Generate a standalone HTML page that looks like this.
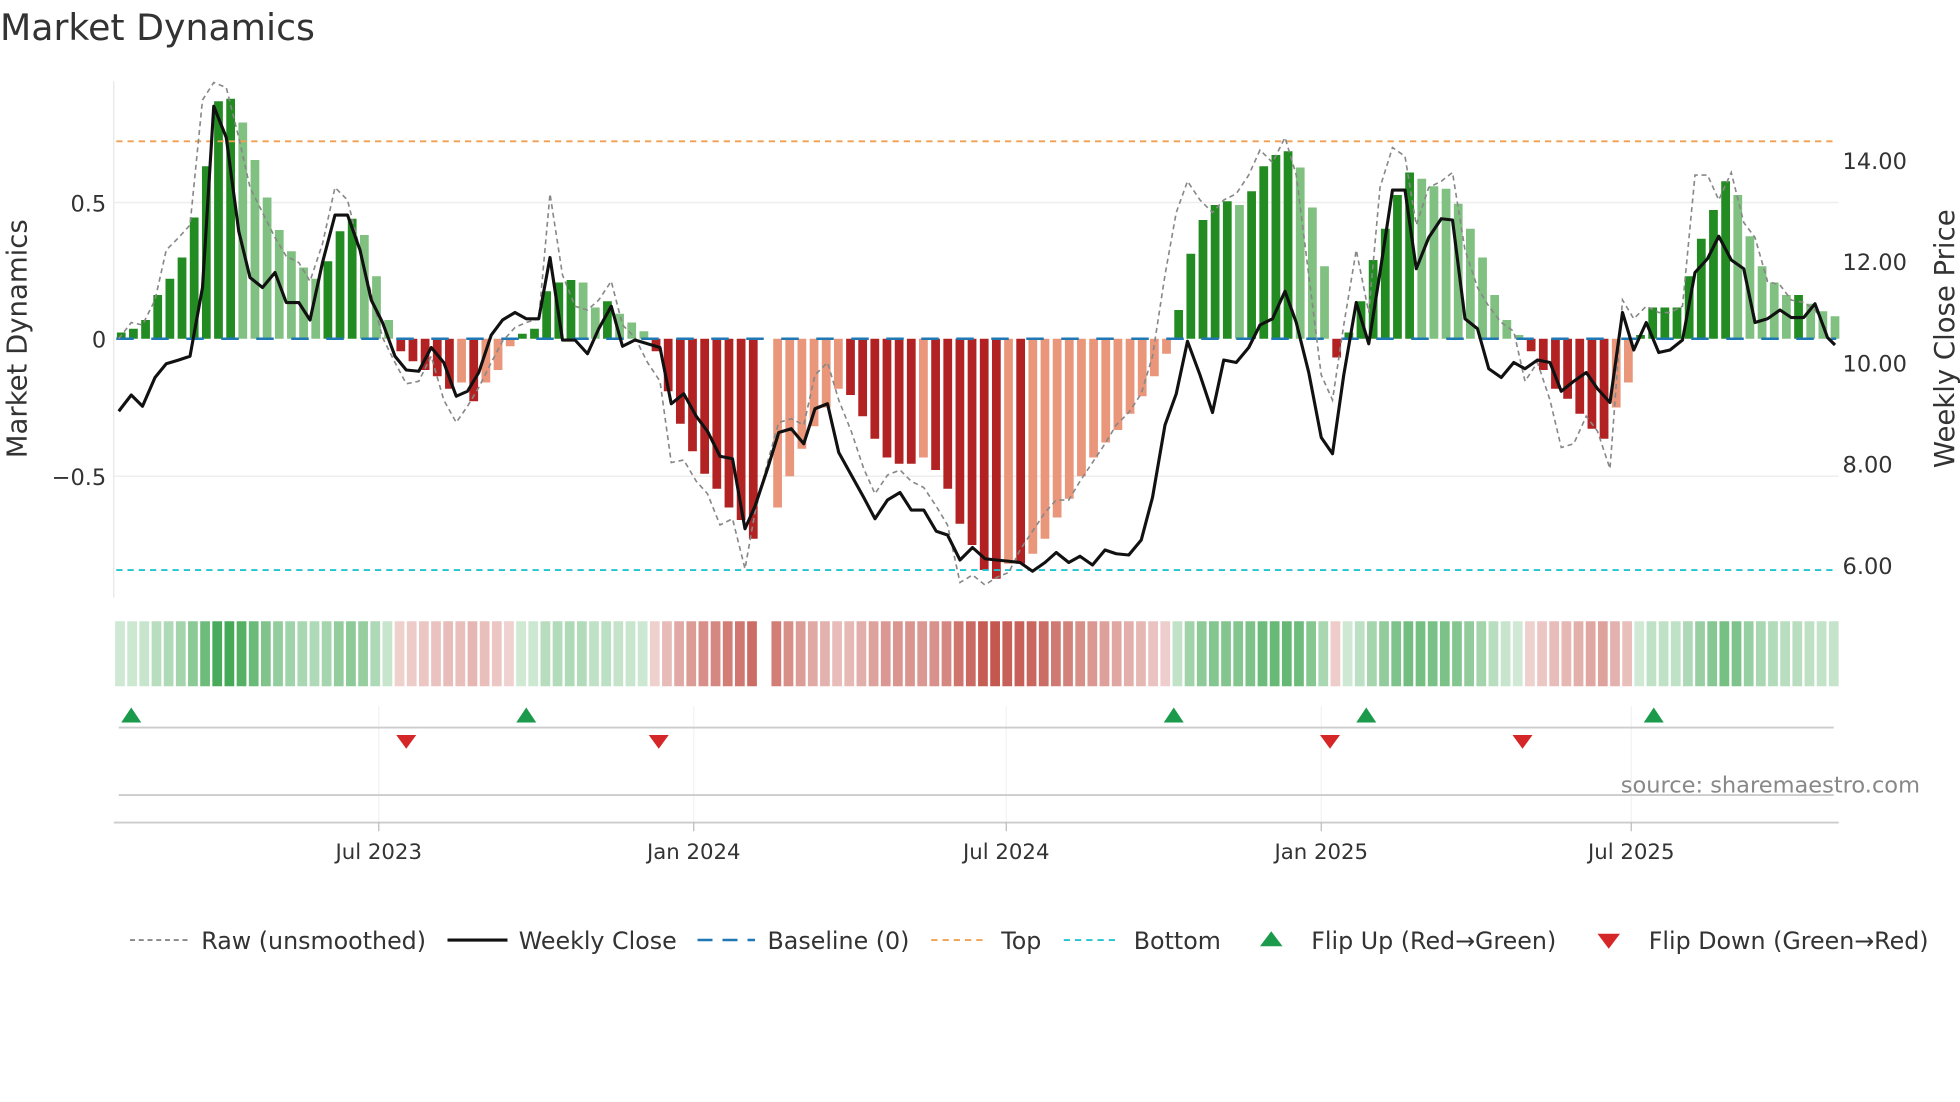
<!DOCTYPE html>
<html><head><meta charset="utf-8"><style>
html,body{margin:0;padding:0;background:#fff;}
svg{display:block;font-family:"DejaVu Sans","Liberation Sans",sans-serif;}
</style></head><body>
<svg id="s" width="1960" height="1102" viewBox="0 0 1568 881.6" xmlns="http://www.w3.org/2000/svg">
<rect width="1568" height="882" fill="#fff"/>
<text x="0" y="32" font-size="29" fill="#333">Market Dynamics</text>
<line x1="91" y1="65" x2="91" y2="478" stroke="#e6e6e6" stroke-width="1"/>
<line x1="91" y1="162" x2="1471" y2="162" stroke="#eee" stroke-width="1.2"/>
<line x1="91" y1="381" x2="1471" y2="381" stroke="#eee" stroke-width="1.2"/>
<g id="bars"></g>
<g id="strip"></g>
<line x1="93" y1="271" x2="1469" y2="271" stroke="#1f77b4" stroke-width="2" stroke-dasharray="14,14"/>
<line x1="93" y1="113" x2="1469" y2="113" stroke="#f0a050" stroke-width="1.5" stroke-dasharray="5,4"/>
<line x1="93" y1="456" x2="1469" y2="456" stroke="#22c4d0" stroke-width="1.5" stroke-dasharray="5,4"/>
<polyline id="raw" fill="none" stroke="#888" stroke-width="1.3" stroke-dasharray="4,3"/>
<polyline id="close" fill="none" stroke="#111" stroke-width="2.5" stroke-linejoin="round"/>
<g font-size="18" fill="#333" text-anchor="end">
<text x="85" y="169">0.5</text><text x="85" y="278">0</text><text x="85" y="388">−0.5</text>
</g>
<g font-size="18" fill="#333">
<text x="1474" y="135">14.00</text><text x="1474" y="216">12.00</text><text x="1474" y="297">10.00</text><text x="1474" y="378">8.00</text><text x="1474" y="459">6.00</text>
</g>
<text transform="translate(21,271) rotate(-90)" font-size="22" fill="#333" text-anchor="middle">Market Dynamics</text>
<text transform="translate(1563,271) rotate(-90)" font-size="22" fill="#333" text-anchor="middle">Weekly Close Price</text>
<g stroke="#f2f2f2" stroke-width="1">
<line x1="303" y1="565" x2="303" y2="658"/><line x1="555" y1="565" x2="555" y2="658"/><line x1="805" y1="565" x2="805" y2="658"/><line x1="1057" y1="565" x2="1057" y2="658"/><line x1="1305" y1="565" x2="1305" y2="658"/>
</g>
<line x1="95" y1="582" x2="1467" y2="582" stroke="#ccc" stroke-width="1.5"/>
<line x1="95" y1="636" x2="1467" y2="636" stroke="#ccc" stroke-width="1.5"/>
<line x1="91" y1="658" x2="1471" y2="658" stroke="#ccc" stroke-width="1.5"/>
<g stroke="#bbb" stroke-width="1"><line x1="303" y1="658" x2="303" y2="665"/><line x1="555" y1="658" x2="555" y2="665"/><line x1="805" y1="658" x2="805" y2="665"/><line x1="1057" y1="658" x2="1057" y2="665"/><line x1="1305" y1="658" x2="1305" y2="665"/></g>
<g fill="#1a9a4a"><polygon points="97,578 113,578 105,566"/><polygon points="413,578 429,578 421,566"/><polygon points="931,578 947,578 939,566"/><polygon points="1085,578 1101,578 1093,566"/><polygon points="1315,578 1331,578 1323,566"/></g>
<g fill="#d62728"><polygon points="317,588 333,588 325,599"/><polygon points="519,588 535,588 527,599"/><polygon points="1056,588 1072,588 1064,599"/><polygon points="1210,588 1226,588 1218,599"/></g>
<text x="1536" y="634" font-size="18" fill="#888" text-anchor="end">source: sharemaestro.com</text>
<g font-size="17" fill="#333" text-anchor="middle">
<text x="303" y="687">Jul 2023</text><text x="555" y="687">Jan 2024</text><text x="805" y="687">Jul 2024</text><text x="1057" y="687">Jan 2025</text><text x="1305" y="687">Jul 2025</text>
</g>
<g font-size="19" fill="#333">
<line x1="104" y1="752" x2="150" y2="752" stroke="#888" stroke-width="1.5" stroke-dasharray="4,3"/><text x="161" y="759">Raw (unsmoothed)</text>
<line x1="358" y1="752" x2="406" y2="752" stroke="#111" stroke-width="2.5"/><text x="415" y="759">Weekly Close</text>
<line x1="558" y1="752" x2="604" y2="752" stroke="#1f77b4" stroke-width="2" stroke-dasharray="12,8"/><text x="614" y="759">Baseline (0)</text>
<line x1="745" y1="752" x2="790" y2="752" stroke="#f0a050" stroke-width="1.5" stroke-dasharray="5,4"/><text x="801" y="759">Top</text>
<line x1="851" y1="752" x2="896" y2="752" stroke="#22c4d0" stroke-width="1.5" stroke-dasharray="5,4"/><text x="907" y="759">Bottom</text>
<polygon points="1008,757 1026,757 1017,745" fill="#1a9a4a"/><text x="1049" y="759">Flip Up (Red→Green)</text>
<polygon points="1278,747 1296,747 1287,759" fill="#d62728"/><text x="1319" y="759">Flip Down (Green→Red)</text>
</g>
</svg>
<script>
var NS="http://www.w3.org/2000/svg";
var h=[5,8,15,35,48,65,97,138,190,192,173,143,113,87,70,57,48,62,86,96,83,50,15,-10,-18,-25,-30,-40,-35,-50,-35,-25,-6,4,8,38,45,47,45,25,30,20,13,6,-10,-42,-68,-90,-108,-120,-135,-145,-160,null,-135,-110,-88,-70,-55,-40,-45,-62,-80,-95,-100,-100,-95,-105,-120,-148,-165,-185,-192,-180,-180,-172,-160,-143,-128,-110,-95,-83,-73,-60,-46,-30,-12,23,68,95,107,110,107,118,138,147,150,137,105,58,-15,5,30,63,88,115,133,128,122,120,108,88,65,35,15,3,-10,-25,-40,-48,-60,-72,-80,-55,-35,3,25,25,25,50,80,103,126,115,82,58,45,35,35,28,22,18];
var n=h.length, x0=97, dx=(1468-97)/(n-1);
var bars=document.getElementById('bars'), strip=document.getElementById('strip');
var prev=0;
for(var i=0;i<n;i++){
 var v=h[i]; var x=x0+i*dx;
 if(v===null){continue;}
 var col;
 if(v>=0) col=(v>=prev)?'#228b22':'#80c080';
 else col=(v<=prev)?'#b22222':'#e9967a';
 prev=v;
 var r=document.createElementNS(NS,'rect');
 r.setAttribute('x',x-3.5);r.setAttribute('width',7);
 r.setAttribute('y',v>=0?271-v:271);r.setAttribute('height',Math.abs(v));
 r.setAttribute('fill',col);bars.appendChild(r);
 var a=0.22+0.68*Math.min(Math.abs(v)/192,1);
 var s=document.createElementNS(NS,'rect');
 s.setAttribute('x',x-4.9);s.setAttribute('width',7.8);s.setAttribute('y',497);s.setAttribute('height',52);
 s.setAttribute('fill',v>=0?'rgba(50,160,70,'+a+')':'rgba(190,70,60,'+a+')');strip.appendChild(s);
}
var cl=[95,329,105,316,114,325,124,302,133,291,143,288,152,285,162,230,171,85,181,110,191,185,200,222,210,230,220,218,229,242,239,242,248,256,258,210,268,172,278,172,288,200,297,240,306,258,316,285,325,296,335,297,345,278,355,290,365,317,374,313,383,298,393,268,402,256,412,250,421,255,431,255,440,206,450,272,460,272,470,283,479,263,489,245,498,277,508,272,518,275,528,278,537,323,547,315,557,333,566,345,576,365,586,367,596,423,604,405,614,375,623,346,633,343,643,355,652,327,662,323,671,362,681,380,691,398,700,415,710,400,720,394,729,408,739,408,749,425,758,428,768,448,778,438,788,447,797,448,807,449,816,450,826,457,836,450,845,442,855,450,864,445,874,452,884,440,893,443,903,444,913,432,922,398,932,340,941,315,950,273,960,300,970,330,979,288,989,290,999,278,1008,260,1018,255,1028,233,1037,258,1047,298,1057,350,1066,363,1075,300,1085,242,1095,275,1104,218,1114,152,1124,152,1133,215,1143,190,1153,175,1162,176,1172,255,1182,263,1191,295,1201,302,1211,290,1220,295,1230,288,1240,290,1249,313,1259,305,1269,298,1278,311,1288,322,1298,250,1307,280,1317,258,1327,282,1336,280,1346,272,1356,218,1366,207,1375,189,1385,208,1395,215,1404,258,1414,255,1424,248,1433,254,1443,254,1452,243,1462,270,1468,276];
var rw=[95,271,105,258,114,260,124,240,133,200,143,190,152,180,162,80,171,66,181,70,191,110,200,150,210,170,220,190,229,205,239,210,248,225,258,195,268,150,278,160,288,200,297,235,306,270,316,290,325,307,335,305,345,285,355,320,365,338,374,325,383,310,393,290,402,273,412,262,421,258,431,255,440,155,450,220,460,245,470,248,479,240,489,225,498,260,508,270,518,290,528,305,537,370,547,368,557,385,566,395,576,420,586,415,596,455,604,410,614,370,623,338,633,335,643,340,652,300,662,290,671,320,681,345,691,375,700,395,710,380,720,376,729,385,739,390,749,405,758,420,768,466,778,460,788,468,797,462,807,458,816,440,826,425,836,410,845,400,855,400,864,385,874,370,884,355,893,340,903,330,913,315,922,285,932,220,941,170,950,145,960,160,970,170,979,160,989,155,999,140,1008,120,1018,130,1028,110,1037,140,1047,220,1057,300,1066,320,1075,260,1085,200,1095,250,1104,150,1114,118,1124,125,1133,180,1143,150,1153,145,1162,138,1172,200,1182,230,1191,245,1201,258,1211,265,1220,305,1230,290,1240,320,1249,358,1259,355,1269,333,1278,345,1288,375,1298,240,1307,255,1317,245,1327,250,1336,250,1346,245,1356,140,1366,140,1375,160,1385,138,1395,178,1404,190,1414,225,1424,228,1433,240,1443,242,1452,248,1462,265];
function pts(a){var s=[];for(var i=0;i<a.length;i+=2)s.push(a[i]+','+a[i+1]);return s.join(' ');}
document.getElementById('close').setAttribute('points',pts(cl));
document.getElementById('raw').setAttribute('points',pts(rw));
</script>
</body></html>
